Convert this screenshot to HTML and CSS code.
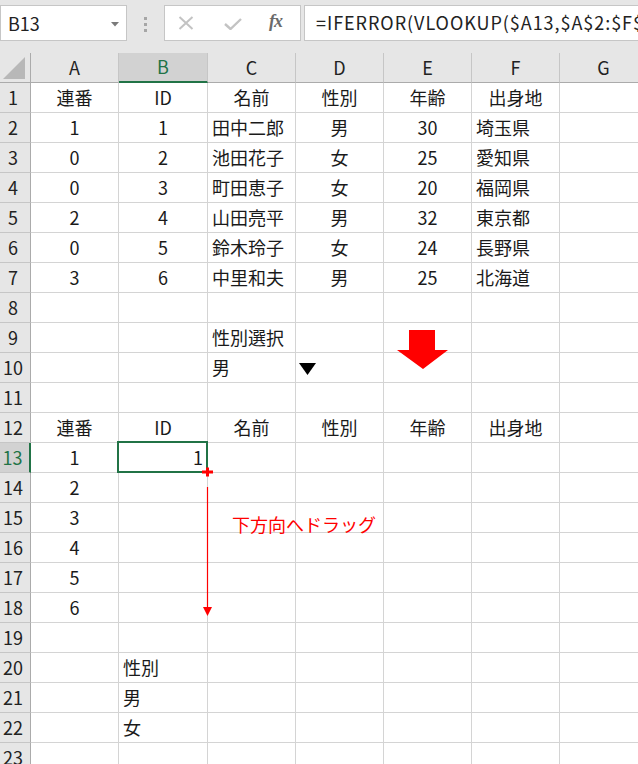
FILE: index.html
```html
<!DOCTYPE html>
<html lang="ja">
<head>
<meta charset="utf-8">
<title>Excel</title>
<link rel="stylesheet" href="styles.css">
</head>
<body>
<div class="app">
  <div class="fbar">
    <div class="namebox"><span>B13</span><svg class="nb-arrow" width="8" height="5" viewBox="0 0 8 5"><polygon points="0,0 8,0 4,4.5" fill="#7a7a7a"/></svg></div>
    <div class="dots"><i></i><i></i><i></i></div>
    <div class="btnbox">
      <svg class="ico" width="16" height="14" viewBox="0 0 16 14"><path d="M1.5 1 L14.5 13 M14.5 1 L1.5 13" stroke="#c3c3c3" stroke-width="2" fill="none"/></svg>
      <svg class="ico" width="18" height="12" viewBox="0 0 18 12"><path d="M1 6 L6.5 11 L17 1" stroke="#c3c3c3" stroke-width="2.4" fill="none"/></svg>
      <span class="fx">fx</span>
    </div>
    <div class="formula">=IFERROR(VLOOKUP($A13,$A$2:$F$7,2,FALSE),"")</div>
  </div>

  <div class="sheet">
    <div class="row hdr">
      <div class="corner"><svg width="23" height="22" viewBox="0 0 23 22"><polygon points="0,22 22,22 22,0" fill="#b8b8b8"/></svg></div>
      <div class="ch">A</div><div class="ch sel">B</div><div class="ch">C</div><div class="ch">D</div><div class="ch">E</div><div class="ch">F</div><div class="ch">G</div>
    </div>
    <div class="row"><div class="rh">1</div><div class="c ctr">連番</div><div class="c ctr">ID</div><div class="c ctr">名前</div><div class="c ctr">性別</div><div class="c ctr">年齢</div><div class="c ctr">出身地</div><div class="c"></div></div>
    <div class="row"><div class="rh">2</div><div class="c ctr">1</div><div class="c ctr">1</div><div class="c">田中二郎</div><div class="c ctr">男</div><div class="c ctr">30</div><div class="c">埼玉県</div><div class="c"></div></div>
    <div class="row"><div class="rh">3</div><div class="c ctr">0</div><div class="c ctr">2</div><div class="c">池田花子</div><div class="c ctr">女</div><div class="c ctr">25</div><div class="c">愛知県</div><div class="c"></div></div>
    <div class="row"><div class="rh">4</div><div class="c ctr">0</div><div class="c ctr">3</div><div class="c">町田恵子</div><div class="c ctr">女</div><div class="c ctr">20</div><div class="c">福岡県</div><div class="c"></div></div>
    <div class="row"><div class="rh">5</div><div class="c ctr">2</div><div class="c ctr">4</div><div class="c">山田亮平</div><div class="c ctr">男</div><div class="c ctr">32</div><div class="c">東京都</div><div class="c"></div></div>
    <div class="row"><div class="rh">6</div><div class="c ctr">0</div><div class="c ctr">5</div><div class="c">鈴木玲子</div><div class="c ctr">女</div><div class="c ctr">24</div><div class="c">長野県</div><div class="c"></div></div>
    <div class="row"><div class="rh">7</div><div class="c ctr">3</div><div class="c ctr">6</div><div class="c">中里和夫</div><div class="c ctr">男</div><div class="c ctr">25</div><div class="c">北海道</div><div class="c"></div></div>
    <div class="row"><div class="rh">8</div><div class="c"></div><div class="c"></div><div class="c"></div><div class="c"></div><div class="c"></div><div class="c"></div><div class="c"></div></div>
    <div class="row"><div class="rh">9</div><div class="c"></div><div class="c"></div><div class="c">性別選択</div><div class="c"></div><div class="c"></div><div class="c"></div><div class="c"></div></div>
    <div class="row"><div class="rh">10</div><div class="c"></div><div class="c"></div><div class="c">男</div><div class="c dd"><svg width="17" height="12" viewBox="0 0 17 12"><polygon points="0,0 17,0 8.5,12" fill="#000"/></svg></div><div class="c"></div><div class="c"></div><div class="c"></div></div>
    <div class="row"><div class="rh">11</div><div class="c"></div><div class="c"></div><div class="c"></div><div class="c"></div><div class="c"></div><div class="c"></div><div class="c"></div></div>
    <div class="row"><div class="rh">12</div><div class="c ctr">連番</div><div class="c ctr">ID</div><div class="c ctr">名前</div><div class="c ctr">性別</div><div class="c ctr">年齢</div><div class="c ctr">出身地</div><div class="c"></div></div>
    <div class="row"><div class="rh sel">13</div><div class="c ctr">1</div><div class="c rgt">1</div><div class="c"></div><div class="c"></div><div class="c"></div><div class="c"></div><div class="c"></div></div>
    <div class="row"><div class="rh">14</div><div class="c ctr">2</div><div class="c"></div><div class="c"></div><div class="c"></div><div class="c"></div><div class="c"></div><div class="c"></div></div>
    <div class="row"><div class="rh">15</div><div class="c ctr">3</div><div class="c"></div><div class="c"></div><div class="c"></div><div class="c"></div><div class="c"></div><div class="c"></div></div>
    <div class="row"><div class="rh">16</div><div class="c ctr">4</div><div class="c"></div><div class="c"></div><div class="c"></div><div class="c"></div><div class="c"></div><div class="c"></div></div>
    <div class="row"><div class="rh">17</div><div class="c ctr">5</div><div class="c"></div><div class="c"></div><div class="c"></div><div class="c"></div><div class="c"></div><div class="c"></div></div>
    <div class="row"><div class="rh">18</div><div class="c ctr">6</div><div class="c"></div><div class="c"></div><div class="c"></div><div class="c"></div><div class="c"></div><div class="c"></div></div>
    <div class="row"><div class="rh">19</div><div class="c"></div><div class="c"></div><div class="c"></div><div class="c"></div><div class="c"></div><div class="c"></div><div class="c"></div></div>
    <div class="row"><div class="rh">20</div><div class="c"></div><div class="c">性別</div><div class="c"></div><div class="c"></div><div class="c"></div><div class="c"></div><div class="c"></div></div>
    <div class="row"><div class="rh">21</div><div class="c"></div><div class="c">男</div><div class="c"></div><div class="c"></div><div class="c"></div><div class="c"></div><div class="c"></div></div>
    <div class="row"><div class="rh">22</div><div class="c"></div><div class="c">女</div><div class="c"></div><div class="c"></div><div class="c"></div><div class="c"></div><div class="c"></div></div>
    <div class="row"><div class="rh">23</div><div class="c"></div><div class="c"></div><div class="c"></div><div class="c"></div><div class="c"></div><div class="c"></div><div class="c"></div></div>
  </div>

  <div class="selbox"></div>
  <svg class="bigarrow" width="52" height="40" viewBox="0 0 52 40"><polygon points="12,0 38,0 38,20 51,20 26,39 0,20 12,20" fill="#ff0000"/></svg>
  <svg class="drag" width="20" height="160" viewBox="0 0 20 160"><path d="M3 5 H14 M8.5 0.5 V9.5" stroke="#ff0000" stroke-width="3" fill="none"/><path d="M8.5 20 V142" stroke="#ff0000" stroke-width="1.2"/><polygon points="4,140 13,140 8.5,149" fill="#ff0000"/></svg>
  <div class="note">下方向へドラッグ</div>
</div>
</body>
</html>
```

FILE: styles.css
```css
* { box-sizing: border-box; }
body {
  margin: 0;
  background: #fff;
  font-family: "Noto Sans CJK JP", "Noto Sans", sans-serif;
  color: #1a1a1a;
}
.app {
  position: relative;
  width: 638px;
  height: 764px;
  overflow: hidden;
}

/* formula bar */
.fbar {
  height: 53px;
  background: #e6e6e6;
  display: flex;
  align-items: flex-start;
  padding-top: 5px;
}
.namebox {
  width: 127px;
  height: 36px;
  background: #fff;
  border: 1px solid #c6c6c6;
  display: flex;
  align-items: center;
  justify-content: space-between;
  padding: 0 7px 0 7px;
  font-size: 18px;
  color: #222;
}
.nb-arrow { margin-top: 2px; }
.dots {
  width: 37px;
  display: flex;
  flex-direction: column;
  align-items: center;
  gap: 3px;
  padding-top: 12px;
}
.dots i {
  display: block;
  width: 3px;
  height: 3px;
  background: #a6a6a6;
}
.btnbox {
  width: 137px;
  height: 36px;
  background: #fff;
  border: 1px solid #c6c6c6;
  display: flex;
  align-items: center;
  padding-left: 13px;
}
.btnbox .ico:first-child { margin-right: 30px; }
.btnbox .ico:nth-child(2) { margin-right: 27px; margin-top: 2px; }
.fx {
  font-family: "Liberation Serif", "DejaVu Serif", serif;
  font-style: italic;
  font-weight: bold;
  font-size: 18px;
  color: #6b6b6b;
  letter-spacing: -1px;
  margin-top: -3px;
}
.formula {
  margin-left: 3px;
  flex: 1;
  height: 36px;
  background: #fff;
  border: 1px solid #c6c6c6;
  border-right: none;
  white-space: nowrap;
  overflow: hidden;
  font-size: 18px;
  letter-spacing: 0.95px;
  line-height: 33px;
  padding-left: 11px;
  color: #222;
}

/* sheet grid */
.row {
  display: grid;
  grid-template-columns: 31px 88px 89px 88px 88px 88px 88px 88px;
  height: 30px;
}
.row > div {
  border-right: 1px solid #d4d4d4;
  border-bottom: 1px solid #d4d4d4;
  display: flex;
  align-items: center;
  padding-bottom: 2px;
  font-size: 18px;
  white-space: nowrap;
  overflow: hidden;
}
.hdr { background: #e6e6e6; }
.hdr > div { border-bottom: 1px solid #ababab; }
.corner {
  border-right: 1px solid #ababab !important;
  background: #e6e6e6;
  align-items: flex-end !important;
  justify-content: flex-end;
  padding: 0 4px 3px 0 !important;
}
.ch {
  justify-content: center;
  border-right: 1px solid #c6c6c6 !important;
  color: #222;
}
.ch.sel {
  background: #d2d2d2;
  color: #217346;
  border-bottom: 2px solid #217346 !important;
}
.rh {
  background: #e6e6e6;
  justify-content: center;
  padding-right: 4px;
  border-right: 1px solid #ababab !important;
  border-bottom: 1px solid #c6c6c6 !important;
  color: #222;
}
.rh.sel {
  background: #d2d2d2;
  color: #217346;
  border-right: 2px solid #217346 !important;
}
.c { padding-left: 4px; padding-right: 4px; }
.c.ctr { justify-content: center; }
.c.rgt { justify-content: flex-end; }
.c.dd { padding-left: 3px; padding-top: 2px; padding-bottom: 0; }

/* overlays */
.selbox {
  position: absolute;
  left: 117px;
  top: 441px;
  width: 91px;
  height: 32px;
  border: 2px solid #217346;
}
.bigarrow {
  position: absolute;
  left: 397px;
  top: 330px;
}
.drag {
  position: absolute;
  left: 199px;
  top: 467px;
}
.note {
  position: absolute;
  left: 232px;
  top: 510px;
  font-size: 18px;
  line-height: 28px;
  color: #ff0000;
  white-space: nowrap;
}
```
